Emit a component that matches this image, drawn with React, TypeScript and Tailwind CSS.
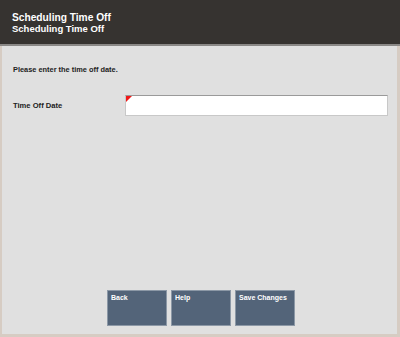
import React from "react";

export default function App() {
  const font = { fontFamily: '"Liberation Sans", Arial, sans-serif' };
  return (
    <div className="w-[400px] h-[337px] flex flex-col bg-[#e0e0e0]" style={font}>
      <div className="h-[46px] bg-[#363330] border-b-2 border-[#8a8886] flex flex-col justify-center pl-[12px] pt-[2px] text-white font-bold">
        <div className="text-[10.2px] leading-[11px]">Scheduling Time Off</div>
        <div className="text-[9.5px] leading-[11px]">Scheduling Time Off</div>
      </div>
      <div className="flex-1 flex flex-col border-l-2 border-r-[3px] border-b-[3px] border-[#d6ccc3] bg-[#e0e0e0]">
        <div className="pl-[11px] pt-[19px] text-[7.4px] font-bold text-[#222] leading-[10px]">
          Please enter the time off date.
        </div>
        <div className="flex items-center pl-[11px] mt-[20px]">
          <div className="w-[112px] text-[7.6px] font-bold text-[#222]">Time Off Date</div>
          <div className="relative w-[263px] h-[21px] bg-white border border-[#c8c8c8] border-t-[#9a9a9a]">
            <svg className="absolute left-0 top-0" width="6" height="6" viewBox="0 0 6 6">
              <polygon points="0,0 6,0 0,6" fill="#f01818" />
            </svg>
          </div>
        </div>
        <div className="mt-auto mb-[8px] flex gap-[4px] pl-[105px]">
          {["Back", "Help", "Save Changes"].map((t) => (
            <div
              key={t}
              className="w-[60px] h-[36px] bg-[#536479] border border-[#8c98a6] text-white font-bold text-[7px] leading-[9px] pl-[3px] pt-[2px]"
            >
              {t}
            </div>
          ))}
        </div>
      </div>
    </div>
  );
}
